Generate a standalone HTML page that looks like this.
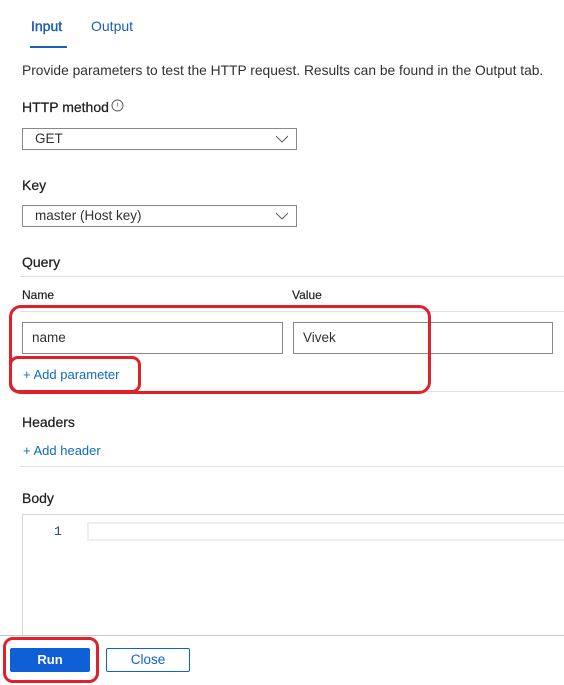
<!DOCTYPE html>
<html><head><meta charset="utf-8"><style>
*{margin:0;padding:0;box-sizing:border-box}
body{width:564px;height:685px;background:#fff;font-family:"Liberation Sans",sans-serif;color:#323130;position:relative;overflow:hidden}
.a{position:absolute;white-space:nowrap}
.lbl{font-size:14px;font-weight:normal;color:#201f1e;-webkit-text-stroke:0.25px #201f1e}
.sel{position:absolute;border:1px solid #8a8886;background:#fff;font-size:13.5px;padding-left:12px;line-height:20px}
.sel svg{position:absolute;right:8px;top:6px}
.hl{position:absolute;height:1px;background:#e1dfdd;left:20px;right:0}
.inp{position:absolute;border:1px solid #8a8886;font-size:13.5px;padding-left:9px;line-height:29px;height:32px}
.link{color:#0f6cbd;font-size:13px}
.red{position:absolute;border:3px solid #e0202a;border-radius:12px}
</style></head><body>
<div class="a" style="left:31px;top:18px;font-size:14px;color:#1f5fb0;-webkit-text-stroke:0.4px #1f5fb0">Input</div>
<div class="a" style="left:30px;top:46px;width:37px;height:2px;background:#1f5fb0"></div>
<div class="a" style="left:91px;top:18px;font-size:14px;color:#1f5fb0">Output</div>
<div class="a" style="left:22px;top:63px;font-size:13.8px;color:#323130">Provide parameters to test the HTTP request. Results can be found in the Output tab.</div>
<div class="a lbl" style="left:22px;top:99px">HTTP method</div>
<svg class="a" style="left:111px;top:99px" width="13" height="13"><circle cx="6.5" cy="6.5" r="5.5" fill="none" stroke="#555" stroke-width="0.9"/><line x1="6.5" y1="3.5" x2="6.5" y2="7.5" stroke="#888" stroke-width="0.9"/></svg>
<div class="sel" style="left:22px;top:128px;width:275px;height:22px">GET<svg width="12" height="8"><path d="M0 1 L6 7 L12 1" fill="none" stroke="#605e5c" stroke-width="1"/></svg></div>
<div class="a lbl" style="left:22px;top:177px">Key</div>
<div class="sel" style="left:22px;top:205px;width:275px;height:22px">master (Host key)<svg width="12" height="8"><path d="M0 1 L6 7 L12 1" fill="none" stroke="#605e5c" stroke-width="1"/></svg></div>
<div class="a lbl" style="left:22px;top:254px">Query</div>
<div class="hl" style="top:276px"></div>
<div class="a" style="left:22px;top:288px;font-size:12px;color:#201f1e;-webkit-text-stroke:0.2px #201f1e">Name</div>
<div class="a" style="left:292px;top:288px;font-size:12px;color:#201f1e;-webkit-text-stroke:0.2px #201f1e">Value</div>
<div class="hl" style="top:311px"></div>
<div class="inp" style="left:22px;top:322px;width:261px">name</div>
<div class="inp" style="left:293px;top:322px;width:260px">Vivek</div>
<div class="a link" style="left:23px;top:367px">+ Add parameter</div>
<div class="hl" style="top:391px"></div>
<div class="a lbl" style="left:22px;top:414px">Headers</div>
<div class="a link" style="left:23px;top:443px">+ Add header</div>
<div class="hl" style="top:466px"></div>
<div class="a lbl" style="left:22px;top:490px">Body</div>
<div class="a" style="left:22px;top:514px;width:560px;height:122px;border:1px solid #d6d6d6"></div>
<div class="a" style="left:54px;top:524px;font-family:'Liberation Mono',monospace;font-size:13px;color:#1f3a8a">1</div>
<div class="a" style="left:87px;top:522px;width:500px;height:19px;border:2px solid #eeeeee"></div>
<div class="a" style="left:0;top:635px;width:564px;height:1px;background:#c8c6c4"></div>
<div class="a" style="left:10px;top:648px;width:80px;height:24px;background:#0f5fd7;border-radius:2px;color:#fff;font-weight:700;font-size:13px;text-align:center;line-height:24px">Run</div>
<div class="a" style="left:106px;top:648px;width:84px;height:24px;border:1px solid #0f5fd7;border-radius:2px;color:#0f5fd7;font-size:13.5px;text-align:center;line-height:22px">Close</div>
<div class="red" style="left:9px;top:305px;width:422px;height:89px"></div>
<div class="red" style="left:9px;top:356px;width:132px;height:37px;border-radius:9px"></div>
<div class="red" style="left:3px;top:637px;width:96px;height:46px;border-radius:10px"></div>
</body></html>
